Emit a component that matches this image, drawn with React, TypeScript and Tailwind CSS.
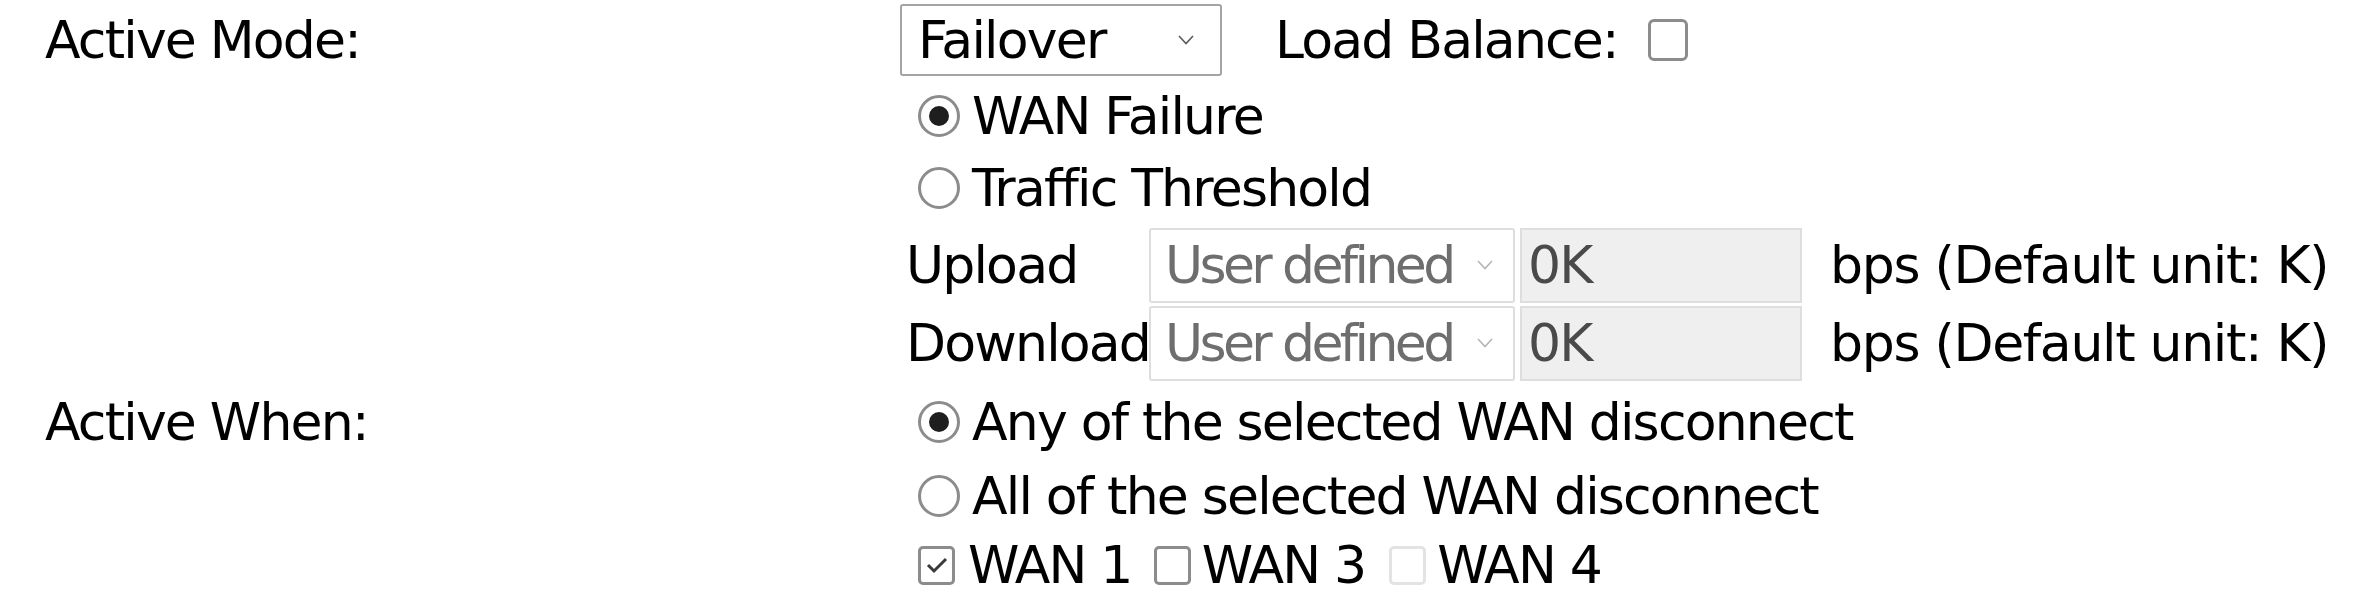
import React from "react";

function Chevron({ color }: { color: string }) {
  return (
    <svg width="16" height="10" viewBox="0 0 16 10" className="shrink-0">
      <polyline points="1,1 8,8.5 15,1" fill="none" stroke={color} strokeWidth="1.6" />
    </svg>
  );
}

function Radio({ checked }: { checked?: boolean }) {
  return (
    <span className="w-[42px] h-[42px] shrink-0 rounded-full border-[3px] border-[#8c8c8c] bg-white flex items-center justify-center">
      {checked && <span className="w-[20px] h-[20px] rounded-full bg-[#1e1e1e]" />}
    </span>
  );
}

function Check({ checked, disabled, big }: { checked?: boolean; disabled?: boolean; big?: boolean }) {
  const base = big
    ? "w-[40px] h-[42px] shrink-0 rounded-[6px] border-[3px] bg-white flex items-center justify-center"
    : "w-[37px] h-[39px] shrink-0 rounded-[5px] border-[3px] bg-white flex items-center justify-center";
  return (
    <span className={disabled ? base + " border-[#e3e3e3]" : base + " border-[#8c8c8c]"}>
      {checked && (
        <svg width="24" height="20" viewBox="0 0 24 20">
          <polyline points="3,10 9,16 21,4" fill="none" stroke="#3a3a3a" strokeWidth="3" />
        </svg>
      )}
    </span>
  );
}

function ThresholdRow({ label }: { label: string }) {
  return (
    <div className="h-[78px] flex items-center pl-[6px]">
      <span className="w-[243px] shrink-0 whitespace-nowrap">{label}</span>
      <div className="w-[366px] h-[75px] shrink-0 border-2 border-[#dedede] rounded-[3px] bg-white flex items-center justify-between pl-[14px] pr-[20px] text-[#6e6e6e]">
        <span className="tracking-[-3.6px] whitespace-nowrap">User defined</span>
        <Chevron color="#b5b5b5" />
      </div>
      <div className="w-[282px] h-[75px] shrink-0 ml-[5px] border-2 border-[#dedede] bg-[#efefef] flex items-center pl-[6px] text-[#4a4a4a]">
        0K
      </div>
      <span className="ml-[28px] whitespace-nowrap tracking-[-1.3px]">bps (Default unit: K)</span>
    </div>
  );
}

export default function App() {
  return (
    <div className="w-[2353px] h-[600px] bg-white text-black text-[52px] tracking-[-1.8px] leading-none font-['DejaVu_Sans',sans-serif] overflow-hidden">
      <div className="flex">
        <div className="w-[900px] shrink-0 pl-[45px] h-[80px] flex items-center">Active Mode:</div>
        <div className="flex flex-col">
          <div className="h-[80px] flex items-center">
            <div className="w-[322px] h-[72px] border-2 border-[#a3a3a3] rounded-[3px] bg-white flex items-center justify-between pl-[16px] pr-[26px]">
              <span>Failover</span>
              <Chevron color="#5a5a5a" />
            </div>
            <span className="ml-[53px] whitespace-nowrap">Load Balance:</span>
            <span className="ml-[30px]">
              <Check big />
            </span>
          </div>
          <label className="h-[72px] flex items-center gap-[12px] pl-[18px]">
            <Radio checked />
            <span>WAN Failure</span>
          </label>
          <label className="h-[72px] flex items-center gap-[12px] pl-[18px]">
            <Radio />
            <span>Traffic Threshold</span>
          </label>
          <div className="pt-[2px]">
            <ThresholdRow label="Upload" />
            <ThresholdRow label="Download" />
          </div>
        </div>
      </div>
      <div className="flex">
        <div className="w-[900px] shrink-0 pl-[45px] h-[80px] flex items-center">Active When:</div>
        <div className="flex flex-col">
          <label className="h-[80px] flex items-center gap-[12px] pl-[18px]">
            <Radio checked />
            <span>Any of the selected WAN disconnect</span>
          </label>
          <label className="h-[67px] flex items-center gap-[12px] pl-[18px]">
            <Radio />
            <span>All of the selected WAN disconnect</span>
          </label>
          <div className="h-[72px] flex items-center pl-[18px]">
            <Check checked />
            <span className="ml-[13px]">WAN 1</span>
            <span className="ml-[22px]">
              <Check />
            </span>
            <span className="ml-[11px]">WAN 3</span>
            <span className="ml-[24px]">
              <Check disabled />
            </span>
            <span className="ml-[11px]">WAN 4</span>
          </div>
        </div>
      </div>
    </div>
  );
}
